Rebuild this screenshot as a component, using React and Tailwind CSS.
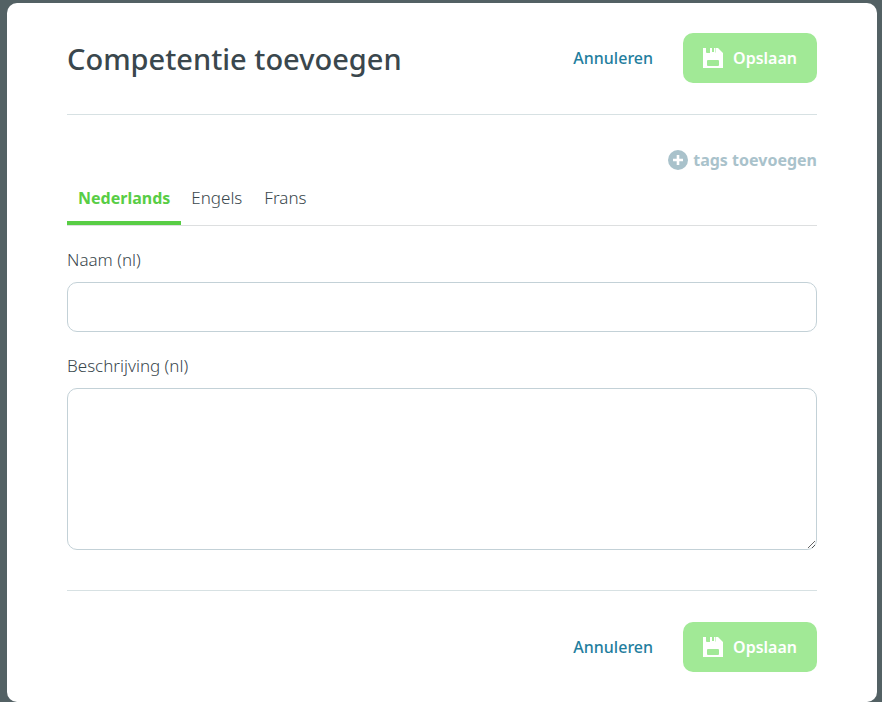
import React, { useState } from "react";

const languages = [
  { code: "nl", label: "Nederlands" },
  { code: "en", label: "Engels" },
  { code: "fr", label: "Frans" },
];

function SaveIcon() {
  return (
    <svg viewBox="0 0 20 20" className="h-5 w-5" fill="currentColor" aria-hidden="true">
      <path
        fillRule="evenodd"
        d="M0 0h3v4a1 1 0 0 0 1 1h7.5a1 1 0 0 0 1-1V0H15l5 5v15H0V0Zm5 12a1 1 0 0 0-1 1v4a1 1 0 0 0 1 1h10a1 1 0 0 0 1-1v-4a1 1 0 0 0-1-1H5Z"
      />
      <path d="M7 0h2v4h2V0h1v5H7z" />
    </svg>
  );
}

function PlusIcon() {
  return (
    <svg viewBox="0 0 20 20" className="h-5 w-5" aria-hidden="true">
      <circle cx="10" cy="10" r="10" fill="currentColor" />
      <path d="M10 5v10M5 10h10" stroke="white" strokeWidth="2.6" />
    </svg>
  );
}

function Actions() {
  return (
    <div className="flex items-center gap-5">
      <button type="button" className="px-2.5 text-[16px] font-medium text-[#1f7e9e]">
        Annuleren
      </button>
      <button
        type="submit"
        className="flex h-[50px] items-center gap-2.5 rounded-[10px] bg-[#a1e996] px-5 text-[16px] font-semibold text-white"
      >
        <SaveIcon />
        Opslaan
      </button>
    </div>
  );
}

export default function App() {
  const [active, setActive] = useState("nl");

  return (
    <div className="min-h-screen bg-[#536164] pt-[3px] pr-[5px] pl-[7px] font-['Noto_Sans','Open_Sans',sans-serif] text-[17px] leading-6 font-light text-[#3a474d]">
      <form className="rounded-[10px] bg-white px-[60px] py-[30px]" onSubmit={(e) => e.preventDefault()}>
        <header className="flex items-center justify-between border-b border-[#d7e1e3] pb-[31px]">
          <h1 className="pt-0.5 text-[29px] leading-10 font-medium">Competentie toevoegen</h1>
          <Actions />
        </header>

        <div className="flex justify-end pt-[33px]">
          <button type="button" className="flex items-center gap-[5px] text-[16px] font-bold text-[#a9c2cb]">
            <PlusIcon />
            tags toevoegen
          </button>
        </div>

        <div role="tablist" className="mt-2 flex border-b border-[#dddfe0]">
          {languages.map(({ code, label }) => (
            <button
              key={code}
              type="button"
              role="tab"
              aria-selected={active === code}
              onClick={() => setActive(code)}
              className={
                active === code
                  ? "border-b-4 border-[#58cd45] px-[11px] pt-1.5 pb-[11px] text-[16px] font-bold text-[#58cd45]"
                  : "mr-0.5 border-b-4 border-transparent px-2.5 pt-1.5 pb-[11px]"
              }
            >
              {label}
            </button>
          ))}
        </div>

        <div className="flex flex-col gap-2.5 pt-[22px]">
          <label htmlFor="name">Naam ({active})</label>
          <input
            id="name"
            type="text"
            className="h-[50px] w-full rounded-[10px] border border-[#c3d1d7] px-4 outline-none"
          />
        </div>

        <div className="flex flex-col gap-2.5 pt-[22px]">
          <label htmlFor="description">Beschrijving ({active})</label>
          <textarea
            id="description"
            className="h-[162px] w-full resize rounded-[10px] border border-[#c3d1d7] px-4 py-3 outline-none"
          />
        </div>

        <footer className="mt-10 flex justify-end border-t border-[#d7e1e3] pt-[31px]">
          <Actions />
        </footer>
      </form>
    </div>
  );
}
